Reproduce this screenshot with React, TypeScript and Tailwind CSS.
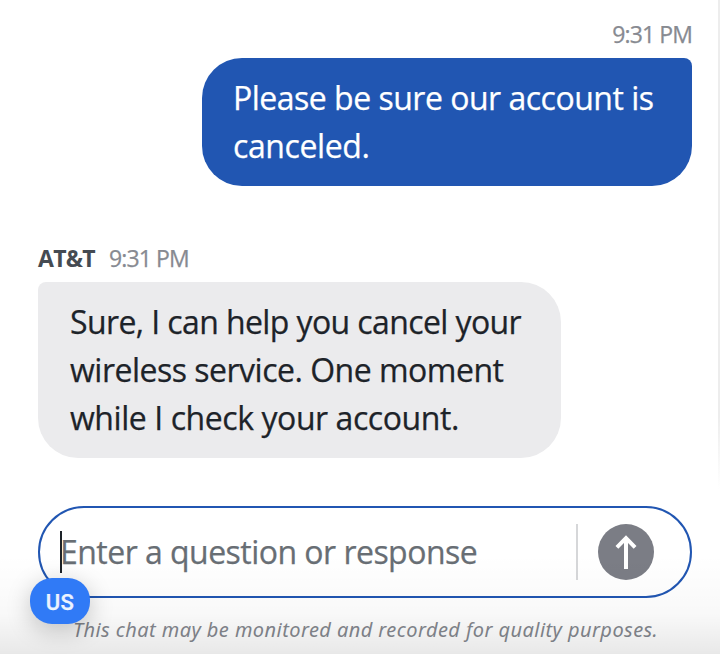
import { ReactNode } from "react"

function Line({ children, className }: { children: ReactNode; className: string }) {
  return <span className={`block whitespace-nowrap ${className}`}>{children}</span>
}

function SendButton() {
  return (
    <button aria-label="Send" className="flex size-14 items-center justify-center rounded-full bg-[#7b7d85]">
      <svg width="56" height="56" viewBox="0 0 56 56" fill="none" stroke="#fff" strokeWidth="4">
        <path d="M28 45V14.5" />
        <path d="M18.9 23.3L28 14.2L37.1 23.3" />
      </svg>
    </button>
  )
}

export default function App() {
  return (
    <div className="relative h-[654px] w-[720px] overflow-hidden bg-white font-['Open_Sans','Noto_Sans',sans-serif] text-[#1d2329] [-webkit-text-stroke:0.25px_currentColor]">
      <div className="flex flex-col pt-[22px] pr-7 pl-[38px]">
        {/* Customer message */}
        <div className="flex flex-col items-end">
          <div className="h-9 whitespace-nowrap text-[23px] leading-[25px] tracking-[-0.9px] text-[#878a91]">9:31 PM</div>
          <div className="h-32 w-[490px] rounded-[40px] rounded-tr-lg bg-[#2156b2] pt-4 pl-[31px] text-[32px] leading-[48px] text-white">
            <Line className="tracking-[-0.5px]">Please be sure our account is</Line>
            <Line className="tracking-[-0.4px]">canceled.</Line>
          </div>
        </div>

        {/* Agent message */}
        <div className="mt-[60px]">
          <div className="flex h-9 whitespace-nowrap text-[23px] leading-[25px]">
            <span className="w-[71px] font-bold tracking-[-0.7px] text-[#454b52] [-webkit-text-stroke:0px]">AT&amp;T</span>
            <span className="tracking-[-0.9px] text-[#878a91]">9:31 PM</span>
          </div>
          <div className="h-44 w-[523px] rounded-[40px] rounded-tl-lg bg-[#ebebed] pt-4 pl-8 text-[32px] leading-[48px]">
            <Line className="tracking-[-0.6px]">Sure, I can help you cancel your</Line>
            <Line className="tracking-[-0.5px]">wireless service. One moment</Line>
            <Line className="tracking-[-0.43px]">while I check your account.</Line>
          </div>
        </div>

        {/* Composer */}
        <div className="mt-12 flex h-[92px] items-center rounded-full border-2 border-[#2156b2] pr-9 pl-5">
          <div className="h-[42px] w-0.5 bg-[#1d2329]" />
          <div className="-ml-0.5 flex-1 whitespace-nowrap text-[32px] leading-[48px] tracking-[-0.53px] text-[#686e74]">
            Enter a question or response
          </div>
          <div className="mr-5 h-14 w-0.5 bg-[#d6d7d9]" />
          <SendButton />
        </div>
        <div className="mt-[18px] pl-[35px] font-['Noto_Sans',sans-serif] whitespace-nowrap text-[20px] leading-7 tracking-[0.43px] text-[#84878e] italic [-webkit-text-stroke:0px]">
          This chat may be monitored and recorded for quality purposes.
        </div>
      </div>

      {/* Scroll edge and bottom fade */}
      <div className="absolute top-0 right-0 h-[490px] w-0.5 bg-linear-to-b from-[#ededed] from-85% to-transparent" />
      <div className="pointer-events-none absolute inset-x-0 bottom-0 h-[100px] bg-linear-to-b from-transparent via-black/[0.025] via-60% to-black/[0.09]" />

      {/* Keyboard layout badge */}
      <div className="absolute top-[578px] left-[30px] flex h-[46px] w-[60px] items-center justify-center rounded-[22px] bg-[#307af6] pt-0.5 font-[Roboto,sans-serif] text-[22px] font-medium tracking-[0.5px] text-white/90 shadow-[0_6px_24px_rgba(0,0,0,0.22)]">
        US
      </div>
    </div>
  )
}
